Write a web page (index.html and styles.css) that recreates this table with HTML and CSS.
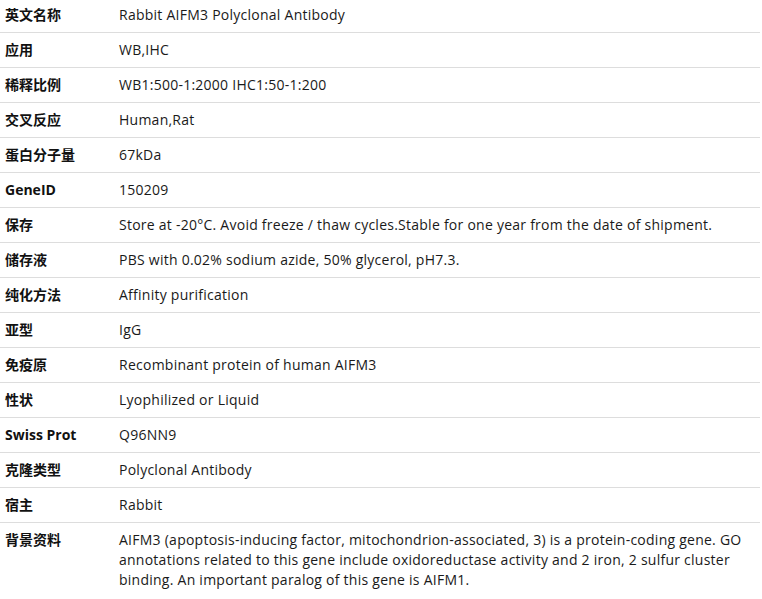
FILE: index.html
```html
<!DOCTYPE html>
<html lang="zh">
<head>
<meta charset="utf-8">
<link rel="stylesheet" href="styles.css">
</head>
<body>
<table class="spec">
<tbody>
<tr><th>英文名称</th><td>Rabbit AIFM3 Polyclonal Antibody</td></tr>
<tr><th>应用</th><td>WB,IHC</td></tr>
<tr><th>稀释比例</th><td>WB1:500-1:2000 IHC1:50-1:200</td></tr>
<tr><th>交叉反应</th><td>Human,Rat</td></tr>
<tr><th>蛋白分子量</th><td>67kDa</td></tr>
<tr><th>GeneID</th><td>150209</td></tr>
<tr><th>保存</th><td>Store at -20°C. Avoid freeze / thaw cycles.Stable for one year from the date of shipment.</td></tr>
<tr><th>储存液</th><td>PBS with 0.02% sodium azide, 50% glycerol, pH7.3.</td></tr>
<tr><th>纯化方法</th><td>Affinity purification</td></tr>
<tr><th>亚型</th><td>IgG</td></tr>
<tr><th>免疫原</th><td>Recombinant protein of human AIFM3</td></tr>
<tr><th>性状</th><td>Lyophilized or Liquid</td></tr>
<tr><th>Swiss Prot</th><td>Q96NN9</td></tr>
<tr><th>克隆类型</th><td>Polyclonal Antibody</td></tr>
<tr><th>宿主</th><td>Rabbit</td></tr>
<tr class="last"><th>背景资料</th><td>AIFM3 (apoptosis-inducing factor, mitochondrion-associated, 3) is a protein-coding gene. GO annotations related to this gene include oxidoreductase activity and 2 iron, 2 sulfur cluster binding. An important paralog of this gene is AIFM1.</td></tr>
</tbody>
</table>
</body>
</html>
```
FILE: styles.css
```css
html, body {
  margin: 0;
  padding: 0;
  background: #fff;
}
body {
  font-family: "Open Sans", "Noto Sans CJK SC", sans-serif;
  font-size: 14px;
  color: #222;
}
.spec {
  width: 760px;
  margin-top: -2px;
  border-collapse: collapse;
  table-layout: fixed;
}
.spec tr {
  border-bottom: 1px solid #ddd;
}
.spec tr.last {
  border-bottom: none;
}
.spec th, .spec td {
  padding: 7px 5px;
  line-height: 20px;
  vertical-align: top;
  text-align: left;
}
.spec th {
  width: 104px;
  font-weight: bold;
  color: #111;
}
.spec td {
  padding-right: 5px;
  letter-spacing: 0.25px;
  color: #1a1a1a;
}
```
